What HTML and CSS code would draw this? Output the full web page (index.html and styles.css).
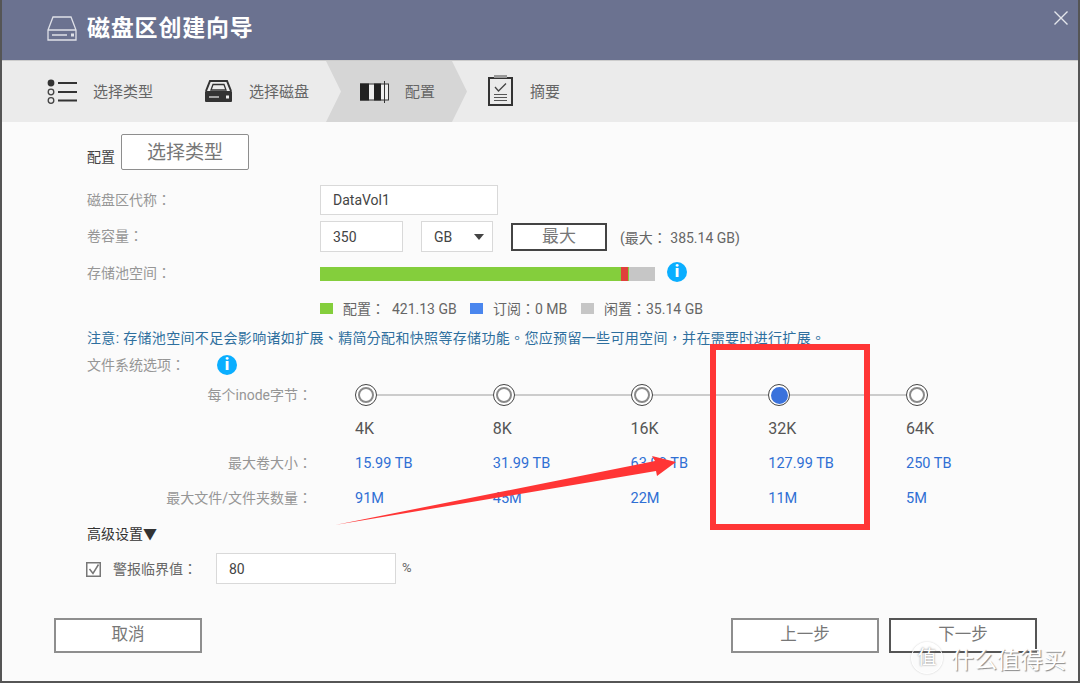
FILE: index.html
```html
<!DOCTYPE html>
<html lang="zh-TW">
<head>
    <meta charset="UTF-8">
    <title>磁盘区创建向导</title>
    <link rel="stylesheet" href="styles.css">
</head>
<body>
    <div class="wizard">
        <header class="title-bar">
            <svg class="title-icon" viewBox="0 0 30 25" width="30" height="25">
                <path d="M1 14 L6 1 H24 L29 14 V24 H1 Z M1 14 H29 M5 19 H20" fill="none" stroke="#dfe1e8" stroke-width="1.3"/>
                <rect x="24" y="17.5" width="3" height="3" fill="#dfe1e8"/>
            </svg>
            <h1>磁盘区创建向导</h1>
            <svg class="close" viewBox="0 0 14 14" width="14" height="14">
                <path d="M0.5 0.5 L13.5 13.5 M13.5 0.5 L0.5 13.5" stroke="#e4e6ec" stroke-width="1.4"/>
            </svg>
        </header>

        <nav class="steps">
            <div class="step step-type">
                <svg viewBox="47 76 46 32" width="46" height="32">
                    <circle cx="51" cy="83" r="3.4" fill="#333"/>
                    <circle cx="51" cy="92" r="2.800" fill="none" stroke="#444" stroke-width="1.300"/>
                    <circle cx="51" cy="100.500" r="2.800" fill="none" stroke="#444" stroke-width="1.300"/>
                    <path d="M58 83 H77 M58 92 H77 M58 100.500 H77" stroke="#333" stroke-width="2"/>
                </svg>
                <span>选择类型</span>
            </div>
            <div class="step step-disk">
                <svg viewBox="203 76 46 32" width="46" height="32">
                    <path d="M206 91 L210 81 H227 L231 91" fill="none" stroke="#333" stroke-width="2"/>
                    <path d="M211 90 L213 84.500 H224 L226 90 Z" fill="none" stroke="#333" stroke-width="1.300"/>
                    <rect x="205" y="91" width="27" height="11" rx="1" fill="#333"/>
                    <path d="M209 97 H219" stroke="#eee" stroke-width="1.200"/>
                    <rect x="226" y="95.500" width="3" height="3" fill="#eee"/>
                </svg>
                <span>选择磁盘</span>
            </div>
            <div class="step step-config">
                <svg viewBox="359 76 46 32" width="46" height="32">
                    <rect x="360.500" y="84" width="28" height="16" fill="#eee" stroke="#333"/>
                    <rect x="360" y="83.500" width="9" height="17" fill="#222"/>
                    <rect x="374" y="83.500" width="7" height="17" fill="#222"/>
                    <path d="M384.500 81 V103" stroke="#333" stroke-width="1"/>
                </svg>
                <span>配置</span>
            </div>
            <div class="step step-summary">
                <svg viewBox="488 76 42 33" width="42" height="33">
                    <rect x="489" y="79" width="23" height="27" fill="none" stroke="#333" stroke-width="2"/>
                    <rect x="494" y="76" width="13" height="3" fill="#999"/>
                    <path d="M495 88 L498.500 92 L506 84.500" fill="none" stroke="#444" stroke-width="1.300"/>
                    <path d="M494 95.500 H507 M494 98.500 H507 M494 101.500 H507" stroke="#555" stroke-width="1.200"/>
                </svg>
                <span>摘要</span>
            </div>
        </nav>

        <main class="form">
            <div class="row row-config">
                <span class="label-dark">配置</span>
                <button class="btn btn-type">选择类型</button>
            </div>

            <div class="row row-name">
                <label class="label">磁盘区代称：</label>
                <input class="input input-name" value="DataVol1">
            </div>

            <div class="row row-size">
                <label class="label">卷容量：</label>
                <input class="input input-size" value="350">
                <div class="select">GB</div>
                <button class="btn btn-max">最大</button>
                <span class="max-note">(最大： 385.14 GB)</span>
            </div>

            <div class="row row-pool">
                <label class="label">存储池空间：</label>
                <div class="pool-bar">
                    <div class="seg seg-used"></div>
                    <div class="seg seg-warn"></div>
                    <div class="seg seg-sub"></div>
                </div>
                <span class="info info-pool">i</span>
            </div>

            <div class="legend">
                <span class="swatch sw-green"></span><span class="legend-a">配置：&nbsp; 421.13 GB</span>
                <span class="swatch sw-blue"></span><span class="legend-b">订阅：0 MB</span>
                <span class="swatch sw-gray"></span><span>闲置：35.14 GB</span>
            </div>

            <p class="notice">注意: 存储池空间不足会影响诸如扩展、精简分配和快照等存储功能。您应预留一些可用空间，并在需要时进行扩展。</p>

            <div class="row row-fs">
                <span class="label label-fs">文件系统选项：</span>
                <span class="info">i</span>
            </div>

            <div class="options">
                <div class="opt-label">每个inode字节：</div>
                <div class="opt-radio"><span class="radio"></span><span class="line"></span></div>
                <div class="opt-radio"><span class="radio"></span><span class="line"></span></div>
                <div class="opt-radio"><span class="radio"></span><span class="line"></span></div>
                <div class="opt-radio"><span class="radio on"></span><span class="line"></span></div>
                <div class="opt-radio"><span class="radio"></span></div>

                <div></div>
                <div class="opt-size">4K</div>
                <div class="opt-size">8K</div>
                <div class="opt-size">16K</div>
                <div class="opt-size">32K</div>
                <div class="opt-size">64K</div>

                <div class="opt-label">最大卷大小：</div>
                <div class="opt-val">15.99 TB</div>
                <div class="opt-val">31.99 TB</div>
                <div class="opt-val">63.99 TB</div>
                <div class="opt-val">127.99 TB</div>
                <div class="opt-val">250 TB</div>

                <div class="opt-label">最大文件/文件夹数量：</div>
                <div class="opt-val">91M</div>
                <div class="opt-val">45M</div>
                <div class="opt-val">22M</div>
                <div class="opt-val">11M</div>
                <div class="opt-val">5M</div>
            </div>

            <div class="advanced">高级设置▼</div>

            <div class="row row-alert">
                <span class="check">
                    <svg viewBox="0 0 15 15" width="15" height="15">
                        <rect x="0.750" y="0.750" width="13.500" height="13.500" fill="#fff" stroke="#777" stroke-width="1.500"/>
                        <path d="M3.500 7 L7 11.500 L12.500 2.500" fill="none" stroke="#777" stroke-width="1.500"/>
                    </svg>
                </span>
                <label class="alert-label">警报临界值：</label>
                <input class="input input-alert" value="80">
                <span class="percent">%</span>
            </div>
        </main>

        <footer class="footer">
            <button class="btn btn-foot">取消</button>
            <div class="footer-right">
                <button class="btn btn-foot">上一步</button>
                <button class="btn btn-foot btn-next">下一步</button>
            </div>
        </footer>
    </div>

    <!-- 截图上的标注 -->
    <div class="mark-box"></div>
    <svg class="mark-arrow" viewBox="0 0 1080 683" width="1080" height="683">
        <polygon points="335,525 655,461 652,456 676,462 657,476 656,471" fill="#ff3535"/>
    </svg>
    <div class="watermark">
        <span class="wm-logo">值</span>
        <span class="wm-text">什么值得买</span>
    </div>
</body>
</html>
```

FILE: styles.css
```css
* { box-sizing: border-box; }
html, body { margin: 0; padding: 0; }
body { width: 1080px; height: 683px; overflow: hidden; background: #555; font-family: Roboto, "Noto Sans CJK TC", sans-serif; color: #555; position: relative; }

.wizard { margin: 0 2px; height: 681px; background: #fbfbfb; }

.title-bar { height: 60px; background: #6b7290; display: flex; align-items: center; padding-left: 45px; }
.title-icon { margin-top: -4px; }
.title-bar h1 { margin: -8px 0 0 10px; font-size: 23px; font-weight: 700; letter-spacing: 0.8px; color: #fff; }
.close { margin-left: auto; margin-right: 10px; margin-top: -25px; }

.steps { height: 62px; display: flex; background: #ebebeb; border-top: 1px solid #ccc; padding-left: 45px; font-size: 15px; color: #666; }
.step { display: flex; align-items: center; height: 61px; }
.step span { padding-bottom: 3px; }
.step-type { width: 156px; }
.step-disk { width: 123px; }
.step-config { width: 141px; padding-left: 33px; background: #d6d6d6; clip-path: polygon(0 0, 126px 0, 141px 50%, 126px 100%, 0 100%, 15px 50%); }
.step-summary { padding-left: 21px; }

.form { padding-left: 85px; }
.row { display: flex; align-items: center; }
.label { width: 233px; padding-bottom: 3px; font-size: 14px; color: #969696; }
.label-dark { font-size: 14px; color: #444; margin-right: 6px; margin-top: 8px; }

.btn { background: #fff; border: 2px solid #8e8e8e; font-family: inherit; line-height: 1; color: #777; padding: 0; }
.btn-type { width: 128px; height: 36px; font-size: 19px; border-width: 1px; border-radius: 2px; }
.btn-max { width: 96px; height: 28px; font-size: 17px; border-color: #444; margin-left: 18px; padding-bottom: 1px; }
.max-note { font-size: 14px; margin-left: 13px; color: #666; }

.input { background: #fff; border: 1px solid #d9d9d9; font-family: inherit; font-size: 14px; color: #444; padding: 0 12px; outline: none; }
.input-name { width: 178px; height: 30px; }
.input-size { width: 83px; height: 31px; }
.select { width: 72px; height: 31px; margin-left: 18px; background: #fff; border: 1px solid #d9d9d9; font-size: 14px; color: #444; line-height: 31px; padding-left: 12px; position: relative; }
.select::after { content: ""; position: absolute; right: 8px; top: 12px; border-left: 5px solid transparent; border-right: 5px solid transparent; border-top: 6px solid #444; }
.input-alert { width: 180px; height: 31px; }

.row-config { margin-top: 12px; height: 36px; }
.row-name { margin-top: 15px; height: 30px; }
.row-size { margin-top: 6px; height: 31px; }
.row-pool { margin-top: 11px; height: 20px; }
.row-fs { margin-top: 5px; height: 24px; }
.row-alert { margin-top: 9px; height: 31px; }

.pool-bar { width: 335px; height: 14px; margin-top: 2px; background: #c6c6c6; display: flex; }
.seg { height: 14px; }
.seg-used { width: 301px; background: #84ce3c; }
.seg-warn { width: 7px; background: #e0403c; }
.seg-sub { width: 1px; background: #84ce3c; }

.info { width: 20px; height: 20px; border-radius: 50%; background: #0aaeff; color: #fff; font-size: 16px; font-weight: 900; line-height: 20px; text-align: center; }
.info-pool { margin-left: 12px; margin-top: -3px; }
.label-fs { width: 130px; }

.legend { margin-top: 15px; margin-left: 233px; height: 20px; display: flex; align-items: center; font-size: 14px; color: #666; }
.swatch { width: 13px; height: 11px; margin-right: 10px; }
.sw-green { background: #84ce3c; }
.sw-blue { background: #4a86ee; }
.sw-gray { background: #c6c6c6; }
.legend-a { width: 127px; white-space: nowrap; }
.legend-b { width: 88px; }

.notice { margin: 10px 0 0; height: 20px; line-height: 20px; font-size: 14px; letter-spacing: 0.33px; color: #2e6f9e; white-space: nowrap; }

.options { margin-top: 1px; display: grid; grid-template-columns: 268px repeat(5, 137.750px); grid-template-rows: 34px 33px 36px 35px; align-items: center; }
.opt-label { font-size: 14px; color: #969696; text-align: right; padding-right: 43px; padding-bottom: 3px; }
.opt-radio { display: flex; align-items: center; }
.radio { width: 22px; height: 22px; flex: none; border-radius: 50%; border: 1.500px solid #444; background: #fff; display: flex; align-items: center; justify-content: center; }
.radio::after { content: ""; width: 12px; height: 12px; border-radius: 50%; border: 2.500px solid #8a8a8a; }
.radio.on::after { width: 13px; height: 13px; background: #3a72dc; border-color: #3a72dc; }
.line { flex: 1; height: 2px; background: #ccc; }
.opt-size { font-size: 16px; color: #555; }
.opt-val { font-size: 14.500px; color: #2f6fd4; }

.advanced { margin-top: 8px; height: 20px; line-height: 20px; font-size: 14px; color: #333; }

.check { width: 15px; height: 15px; display: flex; margin-top: 2px; margin-left: -1px; margin-right: 12px; }
.alert-label { width: 103px; padding-bottom: 2px; font-size: 14px; color: #666; }
.percent { margin-left: 6px; margin-top: -2px; font-size: 13px; color: #666; }

.footer { margin-top: 34px; padding: 0 41px 0 52px; display: flex; justify-content: space-between; }
.footer-right { display: flex; gap: 10px; }
.btn-foot { width: 148px; height: 35px; font-size: 16.500px; }
.btn-next { border-color: #555; }

.mark-box { position: absolute; left: 710px; top: 344px; width: 160px; height: 186px; border: 6px solid #ff3535; }
.mark-arrow { position: absolute; left: 0; top: 0; }

.watermark { position: absolute; left: 911px; top: 641px; display: flex; align-items: center; color: #fff; }
.wm-logo { width: 32px; height: 32px; border: 1px solid rgba(255,255,255,0.9); border-radius: 50%; font-size: 19px; line-height: 30px; text-align: center; text-shadow: 0 0 2px #777; box-shadow: 0 0 2px rgba(0,0,0,0.2); }
.wm-text { margin-left: 8px; font-size: 23px; text-shadow: 1px 1px 1px #888; white-space: nowrap; }
```
